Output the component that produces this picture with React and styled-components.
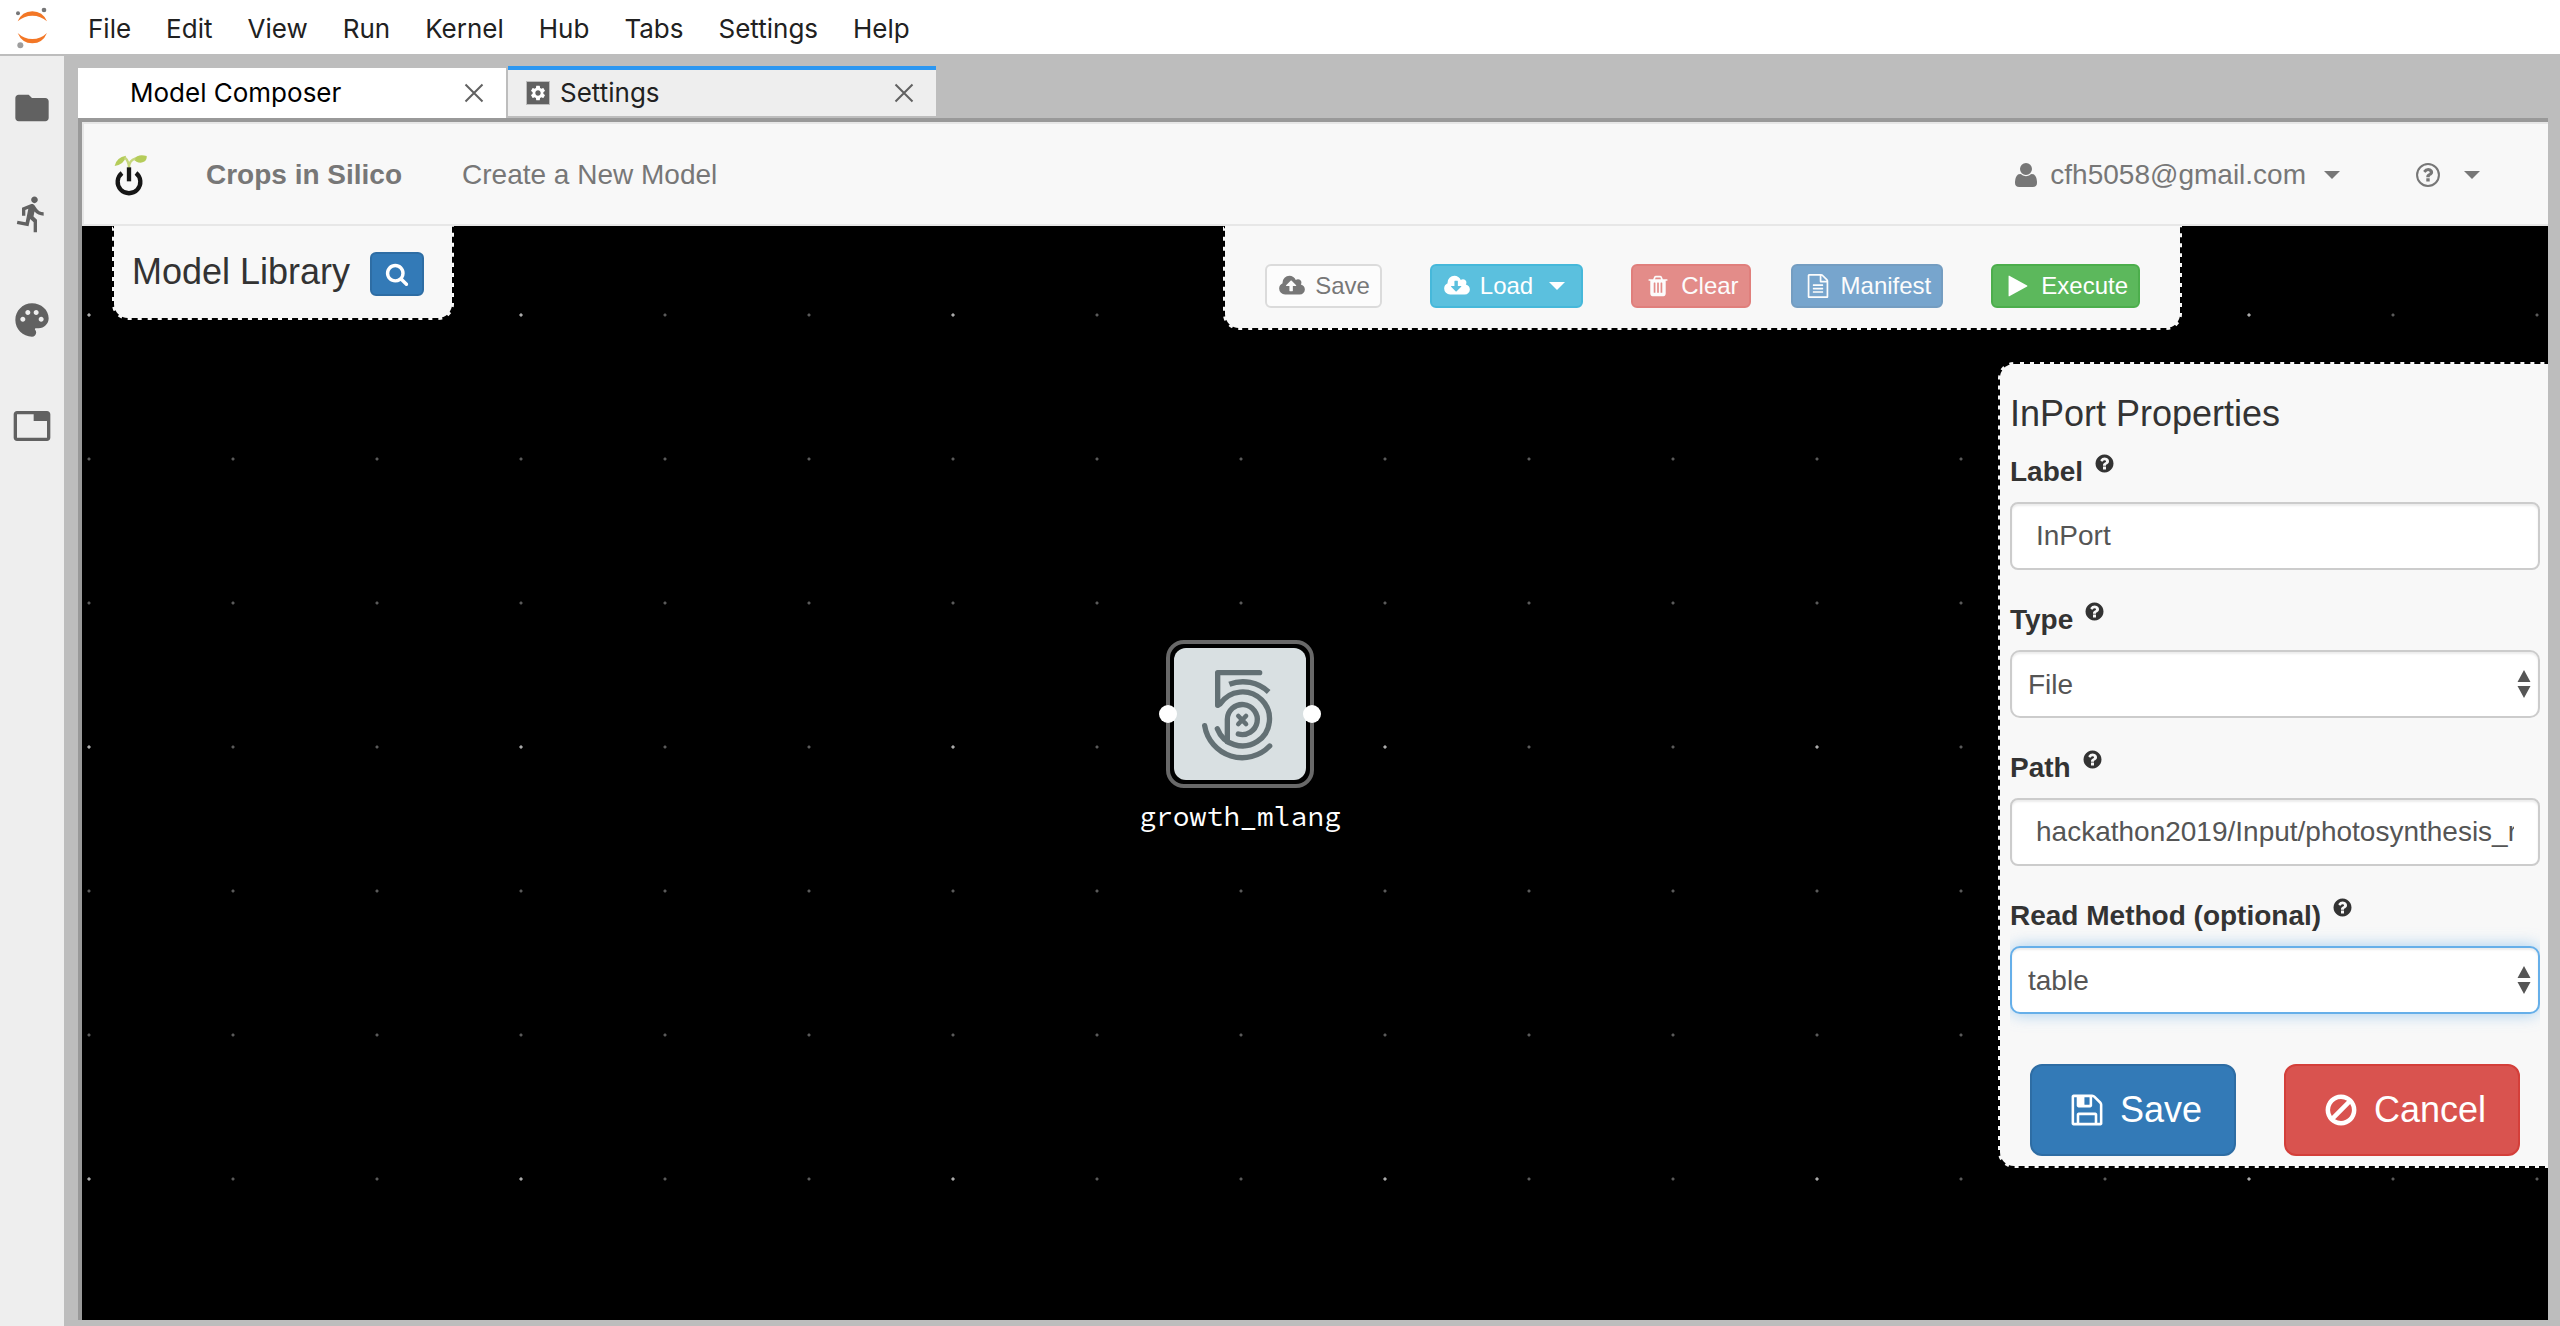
import React from "react";
import styled, { createGlobalStyle } from "styled-components";
import { MdFolder, MdDirectionsRun, MdPalette, MdTab, MdSettings } from "react-icons/md";

const uiFont = `Inter, Roboto, sans-serif`;
const bodyFont = `"Helvetica Neue", "Liberation Sans", Arial, sans-serif`;

const GlobalStyle = createGlobalStyle`
  *, *::before, *::after { box-sizing: border-box; }
  body { margin: 0; background: #bdbdbd; font-family: ${bodyFont}; font-size: 28px; }
  button, input, select { font-family: inherit; margin: 0; }
`;

/* ---------- icon glyphs ---------- */

const CLOUD =
  "M1856 1152q0 159-112.5 271.5t-271.5 112.5h-1088q-185 0-316.5-131.5t-131.5-316.5q0-130 70-240t188-165q-2-30-2-43 0-212 150-362t362-150q156 0 285.5 87t188.5 231q71-62 166-62 106 0 181 75t75 181q0 76-41 138 130 31 213.5 135.5t83.5 238.5z";
const QUESTION =
  "M1024 1376v-192q0-14-9-23t-23-9h-192q-14 0-23 9t-9 23v192q0 14 9 23t23 9h192q14 0 23-9t9-23zm256-672q0-88-55.5-163t-138.5-116-170-41q-243 0-371 213-15 24 8 42l132 100q7 6 19 6 16 0 25-12 53-68 86-92 34-24 86-24 48 0 85.5 26t37.5 59q0 38-20 61t-68 45q-63 28-115.5 86.5t-52.5 125.5v36q0 14 9 23t23 9h192q14 0 23-9t9-23q0-19 21.5-49.5t54.5-49.5q32-18 49-28.5t46-35 44.5-48 28-60.5 12.5-81z";

const GLYPHS = {
  user: "M1600 1405q0 120-73 189.5t-194 69.5h-874q-121 0-194-69.5t-73-189.5q0-53 3.5-103.5t14-109 26.5-108.5 43-97.5 62-81 85.5-53.5 111.5-20q9 0 42 21.5t74.5 48 108 48 133.5 21.5 133.5-21.5 108-48 74.5-48 42-21.5q61 0 111.5 20t85.5 53.5 62 81 43 97.5 26.5 108.5 14 109 3.5 103.5zm-320-893q0 159-112.5 271.5t-271.5 112.5-271.5-112.5-112.5-271.5 112.5-271.5 271.5-112.5 271.5 112.5 112.5 271.5z",
  cloudUp: "M1216 864q0-14-9-23l-352-352q-9-9-23-9t-23 9l-351 351q-10 12-10 24 0 14 9 23t23 9h224v352q0 13 9.5 22.5t22.5 9.5h192q13 0 22.5-9.5t9.5-22.5v-352h224q13 0 22.5-9.5t9.5-22.5z" + CLOUD,
  cloudDown: "M1216 928q0-14-9-23t-23-9h-224v-352q0-13-9.5-22.5t-22.5-9.5h-192q-13 0-22.5 9.5t-9.5 22.5v352h-224q-13 0-22.5 9.5t-9.5 22.5q0 14 9 23l352 352q9 9 23 9t23-9l351-351q10-12 10-24z" + CLOUD,
  trash: "M704 1376v-704q0-14-9-23t-23-9h-64q-14 0-23 9t-9 23v704q0 14 9 23t23 9h64q14 0 23-9t9-23zm256 0v-704q0-14-9-23t-23-9h-64q-14 0-23 9t-9 23v704q0 14 9 23t23 9h64q14 0 23-9t9-23zm256 0v-704q0-14-9-23t-23-9h-64q-14 0-23 9t-9 23v704q0 14 9 23t23 9h64q14 0 23-9t9-23zm-544-992h448l-48-117q-7-9-17-11h-317q-10 2-17 11zm928 32v64q0 14-9 23t-23 9h-96v948q0 83-47 143.5t-113 60.5h-832q-66 0-113-58.5t-47-141.5v-952h-96q-14 0-23-9t-9-23v-64q0-14 9-23t23-9h309l70-167q15-37 54-63t79-26h320q40 0 79 26t54 63l70 167h309q14 0 23 9t9 23z",
  file: "M1596 380q28 28 48 76t20 88v1152q0 40-28 68t-68 28h-1344q-40 0-68-28t-28-68v-1600q0-40 28-68t68-28h896q40 0 88 20t76 48zm-444-244v376h376q-10-29-22-41l-313-313q-12-12-41-22zm384 1528v-1024h-416q-40 0-68-28t-28-68v-416h-768v1536h1280zm-1024-864q0-14 9-23t23-9h704q14 0 23 9t9 23v64q0 14-9 23t-23 9h-704q-14 0-23-9t-9-23v-64zm736 224q14 0 23 9t9 23v64q0 14-9 23t-23 9h-704q-14 0-23-9t-9-23v-64q0-14 9-23t23-9h704zm0 256q14 0 23 9t9 23v64q0 14-9 23t-23 9h-704q-14 0-23-9t-9-23v-64q0-14 9-23t23-9h704z",
  play: "M1576 927l-1328 738q-23 13-39.5 3t-16.5-36v-1472q0-26 16.5-36t39.5 3l1328 738q23 13 23 31t-23 31z",
  floppy: "M512 1536h768v-384h-768v384zm896 0h128v-896q0-14-10-38.5t-20-34.5l-281-281q-10-10-34-20t-39-10v416q0 40-28 68t-68 28h-576q-40 0-68-28t-28-68v-416h-128v1280h128v-416q0-40 28-68t68-28h832q40 0 68 28t28 68v416zm-384-928v-320q0-13-9.5-22.5t-22.5-9.5h-192q-13 0-22.5 9.5t-9.5 22.5v320q0 13 9.5 22.5t22.5 9.5h192q13 0 22.5-9.5t9.5-22.5zm640 32v928q0 40-28 68t-68 28h-1344q-40 0-68-28t-28-68v-1344q0-40 28-68t68-28h928q40 0 88 20t76 48l280 280q28 28 48 76t20 88z",
  ban: "M1440 893q0-161-87-295l-754 753q137 89 297 89 111 0 211.5-43.5t173.5-116.5 116-174.5 43-212.5zm-999 299l755-754q-135-91-300-91-148 0-273 73t-198 199-73 274q0 162 89 299zm1223-299q0 157-61 300t-163.5 246-245 164-298.5 61-298.5-61-245-164-163.5-246-61-300 61-299.5 163.5-245.5 245-164 298.5-61 298.5 61 245 164 163.5 245.5 61 299.5z",
  search: "M1216 832q0-185-131.5-316.5t-316.5-131.5-316.5 131.5-131.5 316.5 131.5 316.5 316.5 131.5 316.5-131.5 131.5-316.5zm512 832q0 52-38 90t-90 38q-54 0-90-38l-343-342q-179 124-399 124-143 0-273.5-55.5t-225-150-150-225-55.5-273.5 55.5-273.5 150-225 225-150 273.5-55.5 273.5 55.5 225 150 150 225 55.5 273.5q0 220-124 399l343 343q37 37 37 90z",
  help: QUESTION + "M1664 896q0 209-103 385.5t-279.5 279.5-385.5 103-385.5-103-279.5-279.5-103-385.5 103-385.5 279.5-279.5 385.5-103 385.5 103 279.5 279.5 103 385.5z",
};

const GlyphSvg = styled.svg`
  flex: none;
  display: block;
  width: ${(p) => p.$size}px;
  height: ${(p) => p.$size}px;
  margin: 0 ${(p) => p.$pad || 0}px;
  fill: currentColor;
  overflow: visible;
`;

const Glyph = ({ name, size, pad }) => (
  <GlyphSvg $size={size} $pad={pad} viewBox="0 0 1792 1792" aria-hidden="true">
    <path fillRule="evenodd" d={GLYPHS[name]} />
  </GlyphSvg>
);

const HelpOutline = () => (
  <GlyphSvg $size={28} viewBox="0 0 1792 1792" aria-hidden="true">
    <circle cx="896" cy="896" r="700" fill="none" stroke="currentColor" strokeWidth="130" />
    <path transform="translate(134 120) scale(.85)" d={QUESTION} />
  </GlyphSvg>
);

const Caret = styled.span`
  flex: none;
  border-top: 8px solid currentColor;
  border-left: 8px solid transparent;
  border-right: 8px solid transparent;
  margin-left: ${(p) => p.$gap}px;
  margin-right: ${(p) => p.$after || 0}px;
`;

/* ---------- shell ---------- */

const Shell = styled.div`
  min-height: 100vh;
  display: flex;
  flex-direction: column;
`;

const MenuBar = styled.header`
  display: flex;
  align-items: center;
  height: 56px;
  padding-left: 15px;
  background: #fff;
  border-bottom: 2px solid #bdbdbd;
  font-family: ${uiFont};
`;

const JupyterMark = styled.svg`
  width: 35px;
  height: 43px;
  margin-right: 38px;
`;

const Menu = styled.nav`
  display: flex;
  gap: 35px;
  padding-top: 4px;
`;

const MenuItem = styled.button`
  padding: 0;
  border: 0;
  background: none;
  color: #212121;
  font-size: 26px;
  line-height: 32px;
`;

const Body = styled.div`
  flex: 1;
  display: flex;
`;

const SideBar = styled.aside`
  width: 64px;
  display: flex;
  flex-direction: column;
  align-items: center;
  padding-top: 32px;
  gap: 66px;
  background: #eee;
`;

const SideButton = styled.button`
  display: block;
  padding: 0;
  border: 0;
  background: none;
  color: #616161;
  svg { display: block; width: 40px; height: 40px; }
`;

const Dock = styled.main`
  flex: 1;
  min-width: 0;
  display: flex;
  flex-direction: column;
  padding: 10px 12px 6px 14px;
`;

const TabRow = styled.div`
  display: flex;
  align-items: flex-end;
  gap: 2px;
  height: 52px;
  font-family: ${uiFont};
`;

const Tab = styled.div`
  display: flex;
  align-items: center;
  width: 428px;
  height: ${(p) => (p.$active ? 50 : 52)}px;
  padding: 0 22px 0 ${(p) => (p.$active ? 52 : 18)}px;
  background: ${(p) => (p.$active ? "#fff" : "#eee")};
  border-top: ${(p) => (p.$active ? 0 : 4)}px solid #2c97f1;
  border-bottom: ${(p) => (p.$active ? 0 : 2)}px solid #bdbdbd;
  color: ${(p) => (p.$active ? "#000" : "#212121")};
  font-size: 26px;
  line-height: 32px;
`;

const TabIcon = styled.span`
  display: flex;
  align-items: center;
  justify-content: center;
  width: 24px;
  height: 24px;
  margin-right: 10px;
  border: 1px solid #bdbdbd;
  background: #616161;
  color: #fff;
  svg { display: block; width: 18px; height: 18px; }
`;

const TabTitle = styled.span`
  flex: 1;
`;

const CloseButton = styled.button`
  display: block;
  padding: 0;
  border: 0;
  background: none;
  color: #616161;
  svg { display: block; width: 20px; height: 20px; }
`;

const Content = styled.section`
  flex: 1;
  display: flex;
  flex-direction: column;
  border-top: 4px solid #999;
  border-left: 4px solid #999;
`;

/* ---------- navbar ---------- */

const NavBar = styled.nav`
  display: flex;
  align-items: center;
  height: 104px;
  padding: 2px 68px 0 30px;
  background: #f8f8f8;
  border: solid #e7e7e7;
  border-width: 2px 0 2px 2px;
  color: #777;
  line-height: 40px;
`;

const SproutMark = styled.svg`
  width: 33px;
  height: 42px;
  margin-right: 59px;
`;

const NavLink = styled.a`
  color: inherit;
  text-decoration: none;
  margin-right: 60px;
  font-weight: ${(p) => (p.$brand ? 700 : 400)};
`;

const NavRight = styled.div`
  margin-left: auto;
  display: flex;
  gap: 74px;
`;

const NavButton = styled.button`
  display: flex;
  align-items: center;
  padding: 0;
  border: 0;
  background: none;
  color: inherit;
  font-size: 28px;
  line-height: 40px;
`;

const NavText = styled.span`
  margin-left: 10px;
`;

/* ---------- graph canvas ---------- */

const Canvas = styled.div`
  position: relative;
  flex: 1;
  overflow: hidden;
  background-color: #000;
  background-image:
    radial-gradient(circle at 7px 89px, #aaa 0 1px, transparent 2px),
    radial-gradient(circle at 7px 89px, #5a5a5a 0 1px, transparent 2px);
  background-size: 432px 432px, 144px 144px;
`;

const Panel = styled.section`
  position: absolute;
  background: #f8f8f8;
  border: 2px dashed #000;
`;

const LibraryPanel = styled(Panel)`
  top: 0;
  left: 30px;
  display: flex;
  align-items: flex-start;
  gap: 20px;
  padding: 26px 28px 22px 18px;
  border-top: 0;
  border-radius: 0 0 16px 16px;
`;

const Heading = styled.h4`
  margin: 0;
  color: #333;
  font-size: 36px;
  line-height: 40px;
  font-weight: 400;
`;

const TONES = {
  plain: ["#fff", "#ccc", "#333"],
  primary: ["#337ab7", "#2e6da4", "#fff"],
  info: ["#5bc0de", "#46b8da", "#fff"],
  danger: ["#d9534f", "#d43f3a", "#fff"],
  success: ["#5cb85c", "#4cae4c", "#fff"],
};

const Button = styled.button`
  display: flex;
  align-items: center;
  justify-content: center;
  height: ${(p) => (p.$large ? 92 : 44)}px;
  padding: 0 ${(p) => (p.$large ? 32 : 10)}px;
  gap: ${(p) => (p.$large ? 10 : 8)}px;
  border: 2px solid ${(p) => TONES[p.$tone][1]};
  border-radius: ${(p) => (p.$large ? 12 : 6)}px;
  background: ${(p) => TONES[p.$tone][0]};
  color: ${(p) => TONES[p.$tone][2]};
  font-size: ${(p) => (p.$large ? 36 : 24)}px;
  line-height: ${(p) => (p.$large ? 48 : 36)}px;
  opacity: ${(p) => (p.$faded ? 0.65 : 1)};
`;

const SearchButton = styled(Button)`
  width: 54px;
`;

const Toolbar = styled(Panel)`
  top: 0;
  right: 366px;
  display: flex;
  gap: 48px;
  padding: 38px 40px 20px;
  border-top: 0;
  border-radius: 0 0 16px 16px;
`;

const ButtonPair = styled.div`
  display: flex;
  gap: 40px;
`;

const Properties = styled(Panel)`
  top: 136px;
  right: 0;
  width: 550px;
  padding: 30px 8px 10px 10px;
  border-right: 0;
  border-radius: 16px 0 0 16px;
`;

const Form = styled.form`
  margin-top: 18px;
`;

const Field = styled.div`
  display: flex;
  flex-direction: column;
  margin-bottom: 30px;
`;

const FieldLabel = styled.label`
  display: flex;
  align-items: center;
  height: 40px;
  margin-bottom: 10px;
  color: #333;
  font-weight: 700;
  line-height: 40px;
`;

const HelpMark = styled.span`
  align-self: flex-start;
  margin: 1px 0 0 11px;
`;

const TextBox = styled.input`
  width: 100%;
  height: 68px;
  padding: 0 24px;
  border: 2px solid #ccc;
  border-radius: 8px;
  background: #fff;
  box-shadow: inset 0 2px 2px rgba(0, 0, 0, 0.075);
  color: #555;
  font-size: 28px;
`;

const SelectWrap = styled.div`
  position: relative;
`;

const Select = styled.select`
  appearance: none;
  display: block;
  width: 100%;
  height: 68px;
  padding: 0 40px 0 16px;
  border: 2px solid ${(p) => (p.$focused ? "#66afe9" : "#ccc")};
  border-radius: 10px;
  background: #fff;
  box-shadow: inset 0 2px 2px rgba(0, 0, 0, 0.075)
    ${(p) => (p.$focused ? ", 0 0 16px rgba(102, 175, 233, 0.6)" : "")};
  clip-path: inset(-20px 0);
  color: #555;
  font-size: 28px;
`;

const Stepper = styled.svg`
  position: absolute;
  right: 9px;
  top: 20px;
  width: 14px;
  height: 28px;
  fill: #555;
  pointer-events: none;
`;

const Actions = styled.div`
  display: flex;
  justify-content: space-between;
  padding: 20px 20px 0;
`;

const Node = styled.figure`
  position: absolute;
  top: 414px;
  left: 1054px;
  width: 208px;
  margin: 0;
  display: flex;
  flex-direction: column;
  align-items: center;
  gap: 12px;
`;

const NodeFrame = styled.div`
  position: relative;
  width: 148px;
  padding: 4px;
  border: 4px solid #696969;
  border-radius: 18px;
`;

const NodeBox = styled.div`
  height: 132px;
  border-radius: 12px;
  background: #d9e0e2;
  svg { display: block; width: 132px; height: 132px; }
`;

const Port = styled.span`
  position: absolute;
  top: 61px;
  ${(p) => p.$side}: -11px;
  width: 18px;
  height: 18px;
  border-radius: 50%;
  background: #fff;
`;

const NodeLabel = styled.figcaption`
  color: #fff;
  font-family: "Source Code Pro", "Liberation Mono", monospace;
  font-size: 28px;
  line-height: 32px;
`;

const CloseIcon = () => (
  <CloseButton aria-label="Close tab">
    <svg viewBox="0 0 20 20" stroke="currentColor" strokeWidth="2">
      <path d="M1.500 1.500 L18.500 18.500 M18.500 1.500 L1.500 18.500" />
    </svg>
  </CloseButton>
);

const MENUS = ["File", "Edit", "View", "Run", "Kernel", "Hub", "Tabs", "Settings", "Help"];
const SIDE = [
  ["Files", MdFolder],
  ["Running", MdDirectionsRun],
  ["Commands", MdPalette],
  ["Tabs", MdTab],
];

const LabelRow = ({ id, text }) => (
  <FieldLabel htmlFor={id}>
    {text}
    <HelpMark>
      <Glyph name="help" size={21} />
    </HelpMark>
  </FieldLabel>
);

const SelectField = ({ id, label, value, focused }) => (
  <Field>
    <LabelRow id={id} text={label} />
    <SelectWrap>
      <Select id={id} defaultValue={value} $focused={focused}>
        <option>{value}</option>
      </Select>
      <Stepper viewBox="0 0 14 28" aria-hidden="true">
        <path d="M7 0 L13.500 12 H0.500 Z M0.500 16 H13.500 L7 28 Z" />
      </Stepper>
    </SelectWrap>
  </Field>
);

const TextField = ({ id, label, value }) => (
  <Field>
    <LabelRow id={id} text={label} />
    <TextBox id={id} type="text" defaultValue={value} />
  </Field>
);

export default function App() {
  return (
    <Shell>
      <GlobalStyle />
      <MenuBar>
        <JupyterMark viewBox="45 20 105 129" aria-hidden="true">
          <path fill="#f37726" d="M53 66 Q66 36 97 36 Q128 36 141 66 Q122 49 97 49 Q72 49 53 66Z" />
          <path fill="#f37726" d="M53 101 Q66 132 97 132 Q128 132 141 101 Q122 119 97 119 Q72 119 53 101Z" />
          <circle cx="54" cy="42" r="6" fill="#767677" />
          <circle cx="132" cy="32" r="7" fill="#767677" />
          <circle cx="61" cy="138" r="9" fill="#9e9e9e" />
        </JupyterMark>
        <Menu>
          {MENUS.map((m) => (
            <MenuItem key={m}>{m}</MenuItem>
          ))}
        </Menu>
      </MenuBar>
      <Body>
        <SideBar>
          {SIDE.map(([label, Icon]) => (
            <SideButton key={label} aria-label={label}>
              <Icon />
            </SideButton>
          ))}
        </SideBar>
        <Dock>
          <TabRow>
            <Tab $active>
              <TabTitle>Model Composer</TabTitle>
              <CloseIcon />
            </Tab>
            <Tab>
              <TabIcon>
                <MdSettings />
              </TabIcon>
              <TabTitle>Settings</TabTitle>
              <CloseIcon />
            </Tab>
          </TabRow>
          <Content>
            <NavBar>
              <SproutMark viewBox="340 464 99 126" aria-hidden="true">
                <path d="M342 500 Q347 474 376 469 Q372 494 342 500Z" fill="#b5cc5a" />
                <path d="M398 479 Q414 462 438 470 Q440 488 420 490 Q406 490 398 479Z" fill="#b5cc5a" />
                <path d="M372 474 Q384 484 385 505 Q386 482 404 478" fill="none" stroke="#c5d67c" strokeWidth="7" />
                <path d="M364 521 A34 34 0 1 0 406 521" fill="none" stroke="#161616" strokeWidth="13" />
                <path d="M385 504 V546" stroke="#161616" strokeWidth="13" />
              </SproutMark>
              <NavLink href="#home" $brand>Crops in Silico</NavLink>
              <NavLink href="#new">Create a New Model</NavLink>
              <NavRight>
                <NavButton>
                  <Glyph name="user" size={28} />
                  <NavText>cfh5058@gmail.com</NavText>
                  <Caret $gap={18} />
                </NavButton>
                <NavButton aria-label="Help">
                  <HelpOutline />
                  <Caret $gap={22} />
                </NavButton>
              </NavRight>
            </NavBar>
            <Canvas>
              <Node>
                <NodeFrame>
                  <NodeBox>
                    <svg viewBox="162 84 396 396" fill="none" stroke="#637074" strokeWidth="16" strokeLinecap="round" strokeLinejoin="round">
                      <path d="M419 158 H293 V256 L300 252 A81 81 0 1 1 292 326" />
                      <path d="M328 193 A112 112 0 0 1 446 216" strokeLinecap="butt" />
                      <path d="M254 317 A114 114 0 0 0 449 378" />
                      <path d="M322 365 V298 A45 45 0 1 1 355 342" />
                      <path d="M355 288 L378 312 M378 288 L355 312" strokeWidth="14" />
                    </svg>
                  </NodeBox>
                  <Port $side="left" />
                  <Port $side="right" />
                </NodeFrame>
                <NodeLabel>growth_mlang</NodeLabel>
              </Node>

              <LibraryPanel>
                <Heading>Model Library</Heading>
                <SearchButton $tone="primary" aria-label="Search models">
                  <Glyph name="search" size={24} />
                </SearchButton>
              </LibraryPanel>

              <Toolbar>
                <Button $tone="plain" $faded>
                  <Glyph name="cloudUp" size={24} pad={3} />
                  Save
                </Button>
                <Button $tone="info">
                  <Glyph name="cloudDown" size={24} pad={3} />
                  Load
                  <Caret $gap={8} $after={6} />
                </Button>
                <ButtonPair>
                  <Button $tone="danger" $faded>
                    <Glyph name="trash" size={24} pad={3} />
                    Clear
                  </Button>
                  <Button $tone="primary" $faded>
                    <Glyph name="file" size={24} pad={3} />
                    Manifest
                  </Button>
                </ButtonPair>
                <Button $tone="success">
                  <Glyph name="play" size={24} pad={3} />
                  Execute
                </Button>
              </Toolbar>

              <Properties>
                <Heading>InPort Properties</Heading>
                <Form>
                  <TextField id="label" label="Label" value="InPort" />
                  <SelectField id="type" label="Type" value="File" />
                  <TextField id="path" label="Path" value="hackathon2019/Input/photosynthesis_rate.txt" />
                  <SelectField id="read" label="Read Method (optional)" value="table" focused />
                  <Actions>
                    <Button type="button" $tone="primary" $large>
                      <Glyph name="floppy" size={36} pad={5} />
                      Save
                    </Button>
                    <Button type="button" $tone="danger" $large>
                      <Glyph name="ban" size={36} pad={5} />
                      Cancel
                    </Button>
                  </Actions>
                </Form>
              </Properties>
            </Canvas>
          </Content>
        </Dock>
      </Body>
    </Shell>
  );
}
